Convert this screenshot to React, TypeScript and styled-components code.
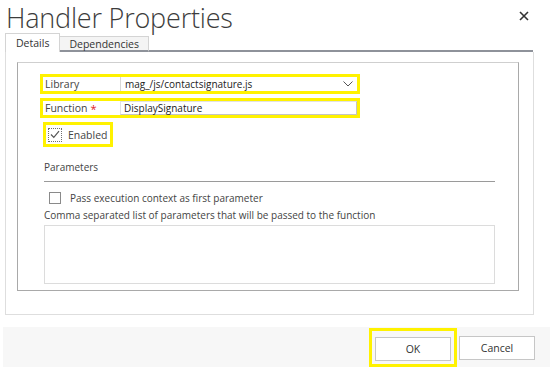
import React from 'react'
import styled, { createGlobalStyle } from 'styled-components'

const GlobalStyle = createGlobalStyle`
  html, body {
    margin: 0;
    padding: 0;
    background: #ffffff;
  }
  body {
    font-family: "Open Sans", "Noto Sans", sans-serif;
    color: #444444;
  }
`

const Dialog = styled.div`
  width: 550px;
  height: 367px;
  overflow: hidden;
  display: flex;
  flex-direction: column;
`

const Header = styled.div`
  height: 33px;
  display: flex;
  align-items: flex-start;
  justify-content: space-between;
  padding: 0 20px 0 6px;
`

const Title = styled.h1`
  margin: 0;
  font-size: 27px;
  line-height: 37px;
  margin-top: -1px;
  font-weight: 300;
  color: #3c3c3c;
  letter-spacing: -0.2px;
`

const Close = styled.button`
  border: 0;
  background: none;
  padding: 0;
  margin-top: 9px;
  width: 12px;
  height: 12px;
  cursor: pointer;
`

const TabStrip = styled.div`
  display: flex;
  align-items: flex-end;
  height: 19px;
  margin: 0 17px 0 5px;
`

const Tab = styled.div<{ $active?: boolean }>`
  height: ${p => (p.$active ? '19px' : '16px')};
  padding: 0 ${p => (p.$active ? '10px' : '9px')};
  box-sizing: border-box;
  border: 1px solid #d4d4d4;
  border-bottom: ${p => (p.$active ? '0' : '2px solid #8e929a')};
  border-left: ${p => (p.$active ? '1px solid #d4d4d4' : '0')};
  background: ${p => (p.$active ? '#ffffff' : '#f4f4f4')};
  font-size: 10.5px;
  line-height: ${p => (p.$active ? '18px' : '14px')};
  color: #333;
`

const TabFill = styled.div`
  flex: 1;
  border-bottom: 2px solid #8e929a;
`

const Panel = styled.div`
  margin: 0 16px 0 5px;
  border: 1px solid #dedede;
  border-top: 0;
  padding: 10px 14px 23px 11px;
`

const Section = styled.div`
  border: 1px solid #a9a9a9;
  border-top-color: #cfcfcf;
  height: 229px;
  box-sizing: border-box;
  padding: 11px 0 0 22px;
  display: flex;
  flex-direction: column;
`

const Highlight = styled.div<{ $w: number; $h: number }>`
  width: ${p => p.$w}px;
  height: ${p => p.$h}px;
  box-sizing: border-box;
  border: 3px solid #fff200;
  display: flex;
  align-items: center;
`

const FieldRow = styled(Highlight)`
  margin-bottom: 4px;
`

const Label = styled.div`
  width: 77px;
  padding-left: 2px;
  box-sizing: border-box;
  font-size: 10.5px;
  color: #444;
  display: flex;
  align-items: center;
`

const Required = styled.span`
  color: #e0201b;
  margin-left: 3px;
  font-size: 11px;
`

const SelectBox = styled.div`
  flex: 1;
  align-self: stretch;
  display: flex;
  align-items: center;
  justify-content: space-between;
  border-left: 1px solid #d8d8d8;
  padding: 0 4px 0 4px;
  font-size: 10px;
  color: #222;
`

const InputBox = styled.div`
  flex: 1;
  align-self: stretch;
  display: flex;
  align-items: center;
  border: 1px solid #e2e2e2;
  border-right-color: #c4c4c4;
  border-bottom-color: #c4c4c4;
  padding: 0 3px;
  font-size: 10px;
  color: #222;
`

const CheckRow = styled(Highlight)`
  margin-left: 3px;
  padding-left: 2px;
  gap: 6px;
`

const CheckBox = styled.span<{ $focus?: boolean }>`
  width: ${p => (p.$focus ? '14px' : '12px')};
  height: ${p => (p.$focus ? '14px' : '12px')};
  box-sizing: border-box;
  border: 1px ${p => (p.$focus ? 'dotted #6f6f6f' : 'solid #8a8a8a')};
  display: inline-flex;
  align-items: center;
  justify-content: center;
  background: #fff;
  flex-shrink: 0;
`

const CheckText = styled.span`
  font-size: 10.5px;
  color: #444;
`

const Params = styled.div`
  margin: 13px 0 0 4px;
  width: 451px;
  display: flex;
  flex-direction: column;
`

const ParamsTitle = styled.div`
  font-size: 10px;
  color: #444;
  padding-bottom: 7px;
  border-bottom: 1px solid #9a9a9a;
`

const PlainCheck = styled.label`
  display: flex;
  align-items: center;
  gap: 9px;
  margin: 9px 0 0 5px;
  font-size: 10px;
  color: #444;
`

const Hint = styled.div`
  margin-top: 3px;
  font-size: 10px;
  color: #444;
`

const TextArea = styled.div`
  margin-top: 3px;
  height: 59px;
  border: 1px solid #dcdcdc;
  box-sizing: border-box;
`

const Footer = styled.div`
  margin: 12px 0 0 3px;
  flex: 1;
  background: #f7f7f7;
  display: flex;
  align-items: flex-start;
  justify-content: flex-end;
  padding: 1px 15px 0 0;
  gap: 2px;
`

const ButtonFrame = styled.div`
  border: 3px solid #fff200;
  padding: 5px 3px 3px 3px;
`

const Button = styled.button`
  width: 76px;
  height: 24px;
  border: 1px solid #c6c6c6;
  background: #ffffff;
  font-family: "Open Sans", "Noto Sans", sans-serif;
  font-size: 10.5px;
  color: #333;
  padding: 0;
`

const PlainButton = styled(Button)`
  margin-top: 8px;
`

const Chevron = () => (
  <svg width="10" height="6" viewBox="0 0 10 6">
    <path d="M0.5 0.5 L5 5 L9.5 0.5" fill="none" stroke="#555" strokeWidth="1" />
  </svg>
)

const Tick = () => (
  <svg width="10" height="9" viewBox="0 0 10 9">
    <path d="M1 4.5 L3.8 7.3 L9 1.2" fill="none" stroke="#555" strokeWidth="1.2" />
  </svg>
)

const App = () => {
  return (
    <Dialog>
      <GlobalStyle />
      <Header>
        <Title>Handler Properties</Title>
        <Close aria-label="Close">
          <svg width="10" height="10" viewBox="0 0 10 10">
            <path d="M1 1 L9 9 M9 1 L1 9" stroke="#333" strokeWidth="1.6" />
          </svg>
        </Close>
      </Header>
      <TabStrip>
        <Tab $active>Details</Tab>
        <Tab>Dependencies</Tab>
        <TabFill />
      </TabStrip>
      <Panel>
        <Section>
          <FieldRow $w={320} $h={20}>
            <Label>Library</Label>
            <SelectBox>
              mag_/js/contactsignature.js
              <Chevron />
            </SelectBox>
          </FieldRow>
          <FieldRow $w={320} $h={20}>
            <Label>
              Function<Required>*</Required>
            </Label>
            <InputBox>DisplaySignature</InputBox>
          </FieldRow>
          <CheckRow $w={70} $h={25}>
            <CheckBox $focus>
              <Tick />
            </CheckBox>
            <CheckText>Enabled</CheckText>
          </CheckRow>
          <Params>
            <ParamsTitle>Parameters</ParamsTitle>
            <PlainCheck>
              <CheckBox />
              Pass execution context as first parameter
            </PlainCheck>
            <Hint>Comma separated list of parameters that will be passed to the function</Hint>
            <TextArea />
          </Params>
        </Section>
      </Panel>
      <Footer>
        <ButtonFrame>
          <Button>OK</Button>
        </ButtonFrame>
        <PlainButton>Cancel</PlainButton>
      </Footer>
    </Dialog>
  )
}

export default App
